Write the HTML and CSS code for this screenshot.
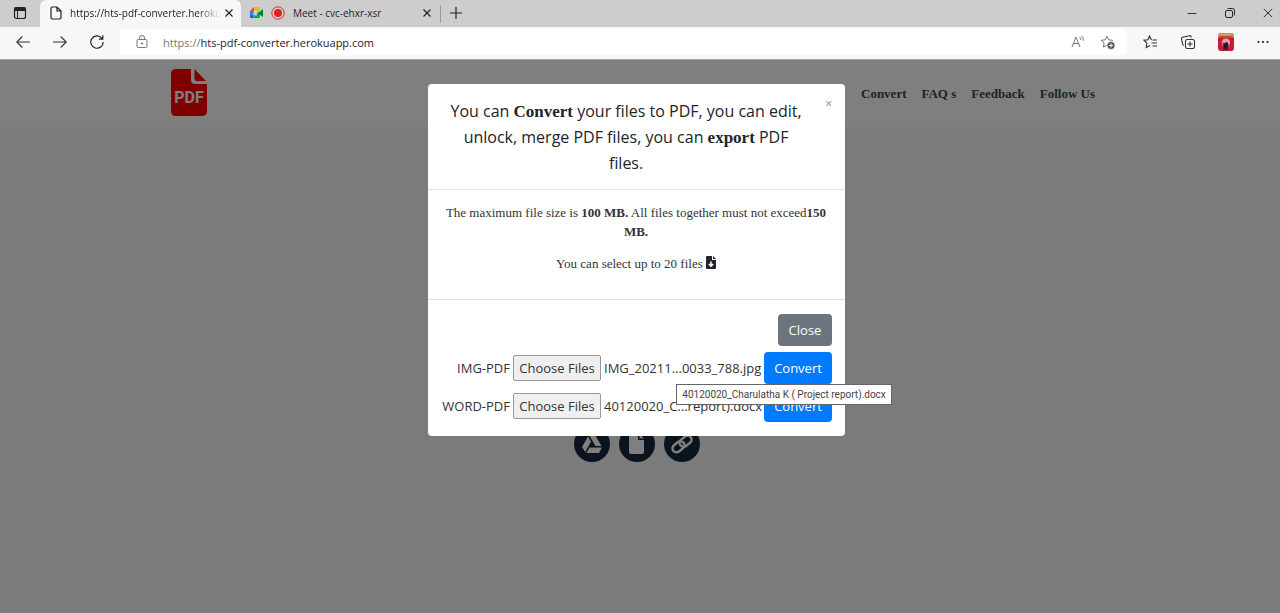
FILE: index.html
```
<!DOCTYPE html>
<html lang="en">
<head>
<meta charset="utf-8">
<meta name="viewport" content="width=device-width, initial-scale=1">
<title>HTS PDF Converter</title>
<link rel="stylesheet" href="styles.css">
</head>
<body>
<div class="tabs">
  <button class="icon-btn tab-menu" aria-label="Tab actions"><svg width="14" height="14" viewBox="0 0 14 14"><rect x="1.5" y="1.5" width="11" height="11" rx="2" fill="none" stroke="#222" stroke-width="1.2"/><path d="M1 5V3q0-2 2-2h8q2 0 2 2v2z" fill="#222"/><path d="M4.5 4v9" stroke="#222"/></svg></button>
  <div class="tab active">
    <svg width="12" height="14" viewBox="0 0 12 14" fill="none" stroke="#222" stroke-width="1.2"><path d="M1 2.200q0-1.200 1.200-1.200H7l4 4v6.800q0 1.200-1.200 1.200H2.200Q1 13 1 11.800zM7 1v4h4"/></svg>
    <span class="tab-title fade">https://hts-pdf-converter.heroku</span>
    <button class="icon-btn" aria-label="Close tab"><svg width="8" height="8" viewBox="0 0 8 8"><path d="M.5.5l7 7m0-7l-7 7" stroke="#222" stroke-width="1.200"/></svg></button>
  </div>
  <div class="tab second">
    <svg width="13" height="12" viewBox="0 0 13 12"><path d="M0 4l4-4v4z" fill="#ea4335"/><path d="M0 4h3.500v5H0z" fill="#2684fc"/><path d="M0 8.500h3.500V11H1q-1 0-1-1z" fill="#0066da"/><path d="M4 0h5q1 0 1 1v3L7 6V3H4z" fill="#ffba00"/><path d="M3.500 8.500H7V6l3-1.500V10q0 1-1 1H3.500z" fill="#00ac47"/><path d="M9 5.500L13 2v8L9 7z" fill="#00832d"/></svg>
    <svg width="14" height="14" viewBox="0 0 14 14"><circle cx="7" cy="7" r="6.200" fill="none" stroke="#d93025" stroke-width="1"/><circle cx="7" cy="7" r="4" fill="#e0221d"/></svg>
    <span class="tab-title">Meet - cvc-ehxr-xsr</span>
    <button class="icon-btn" aria-label="Close tab"><svg width="8" height="8" viewBox="0 0 8 8"><path d="M.5.5l7 7m0-7l-7 7" stroke="#222" stroke-width="1.200"/></svg></button>
  </div>
  <button class="icon-btn new-tab" aria-label="New tab"><svg width="12" height="12" viewBox="0 0 12 12"><path d="M6 0v12M0 6h12" stroke="#222" stroke-width="1.200"/></svg></button>
  <div class="window-controls">
    <button class="icon-btn" aria-label="Minimize"><svg width="10" height="10" viewBox="0 0 10 10"><path d="M.5 5.500h9" stroke="#333"/></svg></button>
    <button class="icon-btn" aria-label="Restore"><svg width="10" height="10" viewBox="0 0 10 10" fill="none" stroke="#222"><rect x=".5" y="2.500" width="7" height="7" rx="1.500"/><path d="M2.500 1q0-.5 1-.5h4q2 0 2 2v4q0 1-.7 1"/></svg></button>
    <button class="icon-btn" aria-label="Close window"><svg width="10" height="10" viewBox="0 0 10 10"><path d="M.8.8l8.400 8.400m0-8.400L.8 9.200" stroke="#333"/></svg></button>
  </div>
</div>
<div class="toolbar">
  <div class="nav-buttons">
    <button class="icon-btn" aria-label="Back"><svg width="14" height="12" viewBox="0 0 14 12" fill="none" stroke="#333" stroke-width="1.100"><path d="M14 6H.8M6.300.5L.8 6l5.500 5.500"/></svg></button>
    <button class="icon-btn" aria-label="Forward"><svg width="14" height="12" viewBox="0 0 14 12" fill="none" stroke="#333" stroke-width="1.100"><path d="M0 6h13.200M7.700.5L13.200 6l-5.500 5.500"/></svg></button>
    <button class="icon-btn" aria-label="Refresh"><svg width="14" height="14" viewBox="0 0 14 14" fill="none" stroke="#222" stroke-width="1.200"><path d="M13.200 7A6.200 6.200 0 1 1 11.800 3.100L12.500 4M12.800.3V4.200H8.900"/></svg></button>
  </div>
  <div class="address">
    <svg width="12" height="14" viewBox="0 0 12 14" fill="none" stroke="#777"><rect x="1" y="4.500" width="10" height="8" rx="1.200"/><path d="M3.500 4.500V3q0-2.500 2.500-2.500T8.500 3v1.500"/><circle cx="6" cy="8.500" r=".7" fill="#777"/></svg>
    <a class="url" href="https://hts-pdf-converter.herokuapp.com"><span class="scheme">https://</span>hts-pdf-converter.herokuapp.com</a>
    <button class="icon-btn" aria-label="Read aloud"><svg width="14" height="14" viewBox="0 0 14 14" fill="none" stroke="#777"><path d="M1 12L5 2l4 10M2.500 8.500h5M8.500 2q1.500 1 1.200 3M10.500.8q2.300 1.700 1.800 5"/></svg></button>
    <button class="icon-btn" aria-label="Add to favorites"><svg width="16" height="15" viewBox="0 0 16 15"><path d="M7 1.200l1.700 3.600 4 .5-2.900 2.800.7 4L7 10.200l-3.600 1.900.7-4L1.200 5.300l4-.5z" fill="none" stroke="#777"/><circle cx="11" cy="10.500" r="4" fill="#555" stroke="#fff" stroke-width=".7"/><path d="M11 8.500v4m-2-2h4" stroke="#fff"/></svg></button>
  </div>
  <div class="tools">
    <button class="icon-btn" aria-label="Favorites"><svg width="15" height="14" viewBox="0 0 15 14" fill="none" stroke="#333" stroke-width="1.100"><path d="M8.500 5L6.500 1 5 4.700l-4 .5 2.900 3-.7 4.300 4-2M9.500 5H14M8.500 8H14M9.500 11H14"/></svg></button>
    <button class="icon-btn" aria-label="Collections"><svg width="14" height="14" viewBox="0 0 14 14" fill="none" stroke="#333" stroke-width="1.100"><rect x="4.500" y="4.500" width="9" height="9" rx="1.800"/><path d="M9 6.500v5M6.500 9h5M3 10.500q-1.200-.2-1.500-1.500L.6 3.800q-.2-1.300 1-1.600L8.500.7q1.500-.3 1.800 1.800"/></svg></button>
    <button class="icon-btn" aria-label="Profile"><svg width="16" height="18" viewBox="0 0 16 18"><rect width="16" height="18" rx="3" fill="#c8183c"/><path d="M0 5V3q0-3 3-3h10q3 0 3 3v2z" fill="#d39b59"/><path d="M1 4h14" stroke="#a83b25" stroke-width="1.500"/><circle cx="8" cy="9.500" r="4" fill="#e6a1a1"/><path d="M5 9.500l1.500 1L8 9l2 1 .5 2.500-1 1V17H8v-3l-1 3H5.500v-4z" fill="#25151e"/></svg></button>
    <button class="icon-btn" aria-label="Settings and more"><svg width="12" height="4" viewBox="0 0 12 4" fill="#222"><circle cx="1.500" cy="2" r="1.100"/><circle cx="6" cy="2" r="1.100"/><circle cx="10.500" cy="2" r="1.100"/></svg></button>
  </div>
</div>
<div class="viewport">
  <header class="site-header">
    <a class="logo" href="#" aria-label="PDF"><svg width="36" height="47" viewBox="0 0 36 47"><path d="M5 0h15v11q0 4 4 4h12v27q0 5-5 5H5q-5 0-5-5V5q0-5 5-5z" fill="#f00"/><path d="M23.500 0L35 12H25.500q-2 0-2-2z" fill="#f00"/><text class="logo-text" x="18" y="34" text-anchor="middle">PDF</text></svg></a>
    <nav class="site-nav"><a href="#">Convert</a><a href="#">FAQ s</a><a href="#">Feedback</a><a href="#">Follow Us</a></nav>
  </header>
  <main class="hero">
    <div class="sources">
      <button class="source" aria-label="Google Drive"><svg width="20" height="18" viewBox="0 0 20 18" fill="#fff"><path d="M7 0h6l6.500 11h-6zM6 1.500l3 5.200L3.200 17 0 12zM7.500 12.500H20L17 18H4.300z"/></svg></button>
      <button class="source" aria-label="File"><svg width="15" height="20" viewBox="0 0 15 20" fill="#fff"><path d="M2 0h7v5q0 1 1 1h5v12q0 2-2 2H2q-2 0-2-2V2q0-2 2-2z"/><path d="M10.500 0L15 4.500h-4.500z"/></svg></button>
      <button class="source" aria-label="Link"><svg width="24" height="20" viewBox="0 0 24 20" fill="none" stroke="#fff" stroke-width="2.500"><g transform="rotate(-38 12 10)"><rect x="1" y="6" width="13" height="8" rx="4"/><rect x="10" y="6" width="13" height="8" rx="4"/></g></svg></button>
    </div>
  </main>
  <div class="backdrop">
    <section class="modal" role="dialog" aria-labelledby="dialog-title">
      <div class="modal-header">
        <h1 class="modal-title" id="dialog-title">You can <b>Convert</b> your files to PDF, you can edit, unlock, merge PDF files, you can <b>export</b> PDF files.</h1>
        <button class="dismiss" aria-label="Close dialog">×</button>
      </div>
      <div class="modal-body">
        <p>The maximum file size is <b>100 MB.</b> All files together must not exceed<b>150 MB.</b></p>
        <p>You can select up to 20 files <svg class="file-icon" width="10" height="13" viewBox="0 0 10 13"><path d="M1 0h5v4h4v8q0 1-1 1H1q-1 0-1-1V1q0-1 1-1zM7 0l3 3H7z" fill="#212529"/><path d="M5 5.500V10M2.800 8L5 10.200 7.200 8" stroke="#fff" stroke-width="1.500" fill="none"/></svg></p>
      </div>
      <div class="modal-footer">
        <button class="btn secondary">Close</button>
        <form class="file-row">
          <label for="img-file">IMG-PDF</label>
          <button class="choose" type="button" id="img-file">Choose Files</button>
          <span class="filename">IMG_20211...0033_788.jpg</span>
          <button class="btn primary" type="button">Convert</button>
        </form>
        <form class="file-row">
          <label for="word-file">WORD-PDF</label>
          <button class="choose" type="button" id="word-file">Choose Files</button>
          <span class="filename">40120020_C...report).docx</span>
          <button class="btn primary" type="button">Convert</button>
          <span class="tooltip" role="tooltip">40120020_Charulatha K ( Project report).docx</span>
        </form>
      </div>
    </section>
  </div>
</div>
</body>
</html>
```
FILE: styles.css
```
* { box-sizing: border-box; }

body {
  margin: 0;
  min-height: 100vh;
  display: flex;
  flex-direction: column;
  font-family: "Open Sans", "Noto Sans", sans-serif;
  color: #212529;
}

button { font: inherit; color: inherit; cursor: pointer; }
a { color: inherit; text-decoration: none; }
svg { display: block; flex: none; }

.icon-btn {
  display: flex;
  align-items: center;
  justify-content: center;
  padding: 0;
  border: 0;
  background: none;
}

/* Browser tabs */
.tabs {
  display: flex;
  align-items: center;
  height: 27px;
  background: #cdcdcd;
  font-size: 10px;
}
.tab-menu { width: 40px; }
.tab {
  display: flex;
  align-items: center;
  width: 201px;
  gap: 8px;
}
.tab.active {
  gap: 4px;
  height: 27px;
  padding: 0 10px 1px;
  background: #f7f7f7;
  border-radius: 6px 6px 0 0;
}
.tab.active .tab-title { padding-left: 4px; }
.tab.second {
  width: 200px;
  height: 18px;
  padding: 0 9px 1px;
  border-right: 1px solid #999;
}
.tab-title { flex: 1; white-space: nowrap; }
.fade { mask-image: linear-gradient(to right, #000 85%, transparent); }
.new-tab { width: 29px; }
.tab-menu, .new-tab { padding-bottom: 1px; }
.window-controls {
  display: flex;
  gap: 28px;
  margin-left: auto;
  padding: 0 7px 1px 0;
}

/* Address bar */
.toolbar {
  display: flex;
  align-items: center;
  height: 33px;
  padding-bottom: 2px;
  background: #f7f7f7;
  border-bottom: 1px solid #a5a5a5;
}
.nav-buttons { display: flex; gap: 23px; width: 120px; padding-left: 16px; }
.address {
  flex: 1;
  display: flex;
  align-items: center;
  gap: 15px;
  height: 26px;
  padding: 0 11px 0 16px;
  border-radius: 4px;
  background: #fff;
  font-size: 11px;
}
.url { flex: 1; }
.scheme { color: #777; }
.tools {
  display: flex;
  align-items: center;
  gap: 23px;
  padding: 0 11px 0 16px;
}

/* Site */
.viewport {
  position: relative;
  flex: 1;
  display: flex;
  flex-direction: column;
  background: #f6f6f6;
}
.site-header {
  display: flex;
  justify-content: space-between;
  align-items: center;
  height: 67px;
  padding: 0 185px 2px 171px;
  background: #fff;
}
.logo-text {
  font: bold 16px "Roboto", sans-serif;
  fill: #fff;
}
.site-nav {
  display: flex;
  gap: 15px;
  padding-top: 2px;
  color: #3a4750;
  font: bold 13px "Liberation Serif", serif;
}
.hero { padding: 299px 7px 24px 0; }
.sources { display: flex; justify-content: center; gap: 9px; }
.source {
  display: flex;
  align-items: center;
  justify-content: center;
  width: 36px;
  height: 36px;
  padding: 0;
  border: 0;
  border-radius: 50%;
  background: #14293d;
}

/* Dialog */
.backdrop {
  position: absolute;
  inset: 0;
  display: flex;
  justify-content: center;
  align-items: flex-start;
  padding: 24px 7px 0 0;
  background: rgba(0, 0, 0, 0.5);
}
.modal {
  width: 417px;
  border-radius: 4px;
  background: #fff;
}
.modal-header {
  display: flex;
  gap: 19px;
  padding: 14px 13px 13px 18px;
  border-bottom: 1px solid #dee2e6;
}
.modal-title {
  flex: 1;
  margin: 0;
  font-size: 16px;
  font-weight: 500;
  line-height: 26px;
  text-align: center;
}
.modal-title b {
  font-family: "Liberation Serif", serif;
  font-size: 17px;
  line-height: 1;
}
.dismiss {
  align-self: flex-start;
  padding: 0;
  border: 0;
  background: none;
  color: #888;
  font-size: 12px;
  line-height: 12px;
}
.modal-body {
  padding: 13px 18px 26px 17px;
  border-bottom: 1px solid #dee2e6;
  color: #333;
  font: 13px/19px "Liberation Serif", serif;
  text-align: center;
}
.modal-body p { margin: 0 0 13px; }
.modal-body p:last-child { margin: 0; }
.file-icon { display: inline-block; vertical-align: -1px; }
.modal-footer {
  display: flex;
  flex-direction: column;
  align-items: flex-end;
  gap: 6px;
  padding: 14px 13px 14px;
  color: #333;
  font-size: 13px;
}
.btn {
  height: 32px;
  padding: 0 10px;
  border: 0;
  border-radius: 4px;
  color: #fff;
}
.secondary { background: #6c757d; width: 54px; }
.primary { background: #007bff; width: 68px; margin-left: 2px; }
.file-row {
  position: relative;
  display: flex;
  align-items: center;
  gap: 3px;
  white-space: nowrap;
}
.choose {
  width: 88px;
  height: 26px;
  padding: 0;
  border: 1px solid #999;
  border-radius: 2px;
  background: #efefef;
}
.filename { width: 155px; }
.tooltip {
  position: absolute;
  left: 234px;
  top: -6px;
  padding: 0 5px;
  border: 1px solid #666;
  background: #fff;
  color: #444;
  font: 10px/19px "Roboto", sans-serif;
}
```
